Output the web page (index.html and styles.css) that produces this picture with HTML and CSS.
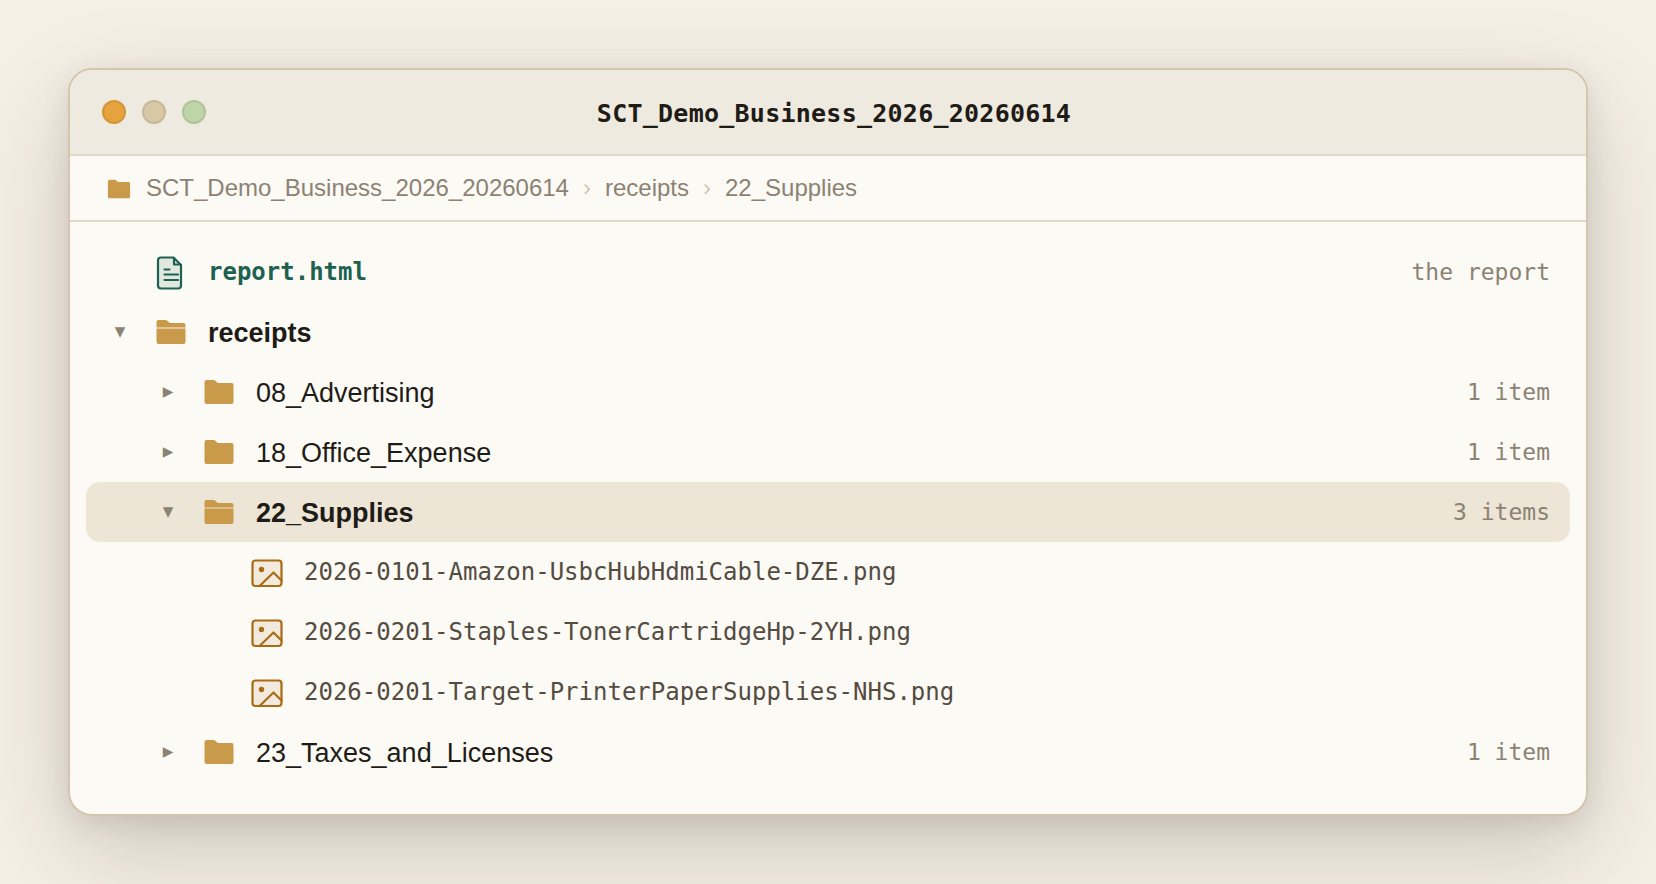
FILE: index.html
```html
<!DOCTYPE html>
<html lang="en">
<head>
  <meta charset="UTF-8" />
  <meta name="viewport" content="width=device-width, initial-scale=1" />
  <title>SCT_Demo_Business_2026_20260614</title>
  <link rel="stylesheet" href="styles.css">
</head>
<body>
  <!-- shared icons -->
  <svg class="sprite" aria-hidden="true">
    <symbol id="folder" viewBox="0 0 34 34">
      <path d="M2.5 7a2 2 0 0 1 2-2h7a3 3 0 0 1 2.1.9l2.100 2.100H29.500a2 2 0 0 1 2 2V27a2 2 0 0 1-2 2H4.500a2 2 0 0 1-2-2z"/>
    </symbol>
    <symbol id="folder-open" viewBox="0 0 34 34">
      <path d="M2.5 12V7a2 2 0 0 1 2-2h7a3 3 0 0 1 2.100.9l2.100 2.100H29.500a2 2 0 0 1 2 2V12z"/>
      <path d="M2.5 12h29v2h-29z" opacity=".55"/>
      <path d="M2.5 14h29v13a2 2 0 0 1-2 2H4.500a2 2 0 0 1-2-2z"/>
    </symbol>
    <symbol id="image" viewBox="0 0 34 34">
      <rect class="fill" x="2.500" y="4.500" width="29" height="25.500" rx="3"/>
      <circle class="dot" cx="11.500" cy="13.500" r="2.700"/>
      <path d="M9.500 30L23.500 16.500 31.500 24.500"/>
    </symbol>
  </svg>

  <div class="window">
    <div class="titlebar">
      <div class="dots">
        <span class="dot-btn close"></span>
        <span class="dot-btn min"></span>
        <span class="dot-btn max"></span>
      </div>
      <div class="title">SCT_Demo_Business_2026_20260614</div>
    </div>

    <div class="crumbs">
      <svg class="crumb-icon"><use href="#folder"/></svg>
      <span>SCT_Demo_Business_2026_20260614</span>
      <span class="sep">›</span>
      <span>receipts</span>
      <span class="sep">›</span>
      <span>22_Supplies</span>
    </div>

    <div class="tree">
      <div class="row report">
        <span class="chevron"></span>
        <svg class="icon doc" viewBox="0 0 34 34">
          <path class="fill" d="M7 1.500h12.500L27 9v20.500a3 3 0 0 1-3 3H7a3 3 0 0 1-3-3V4.500a3 3 0 0 1 3-3z"/>
          <path d="M20 2v6.500h6.500M10.500 13.500h5M10.500 18.500h13.500M10.500 24h13.500"/>
        </svg>
        <span class="name">report.html</span>
        <span class="meta">the report</span>
      </div>
      <div class="row open">
        <span class="chevron">▾</span>
        <svg class="icon folder"><use href="#folder-open"/></svg>
        <span class="name">receipts</span>
      </div>
      <div class="row level-1">
        <span class="chevron">▸</span>
        <svg class="icon folder"><use href="#folder"/></svg>
        <span class="name">08_Advertising</span>
        <span class="meta">1 item</span>
      </div>
      <div class="row level-1">
        <span class="chevron">▸</span>
        <svg class="icon folder"><use href="#folder"/></svg>
        <span class="name">18_Office_Expense</span>
        <span class="meta">1 item</span>
      </div>
      <div class="row level-1 open selected">
        <span class="chevron">▾</span>
        <svg class="icon folder"><use href="#folder-open"/></svg>
        <span class="name">22_Supplies</span>
        <span class="meta">3 items</span>
      </div>
      <div class="row level-2 file">
        <span class="chevron"></span>
        <svg class="icon image"><use href="#image"/></svg>
        <span class="name">2026-0101-Amazon-UsbcHubHdmiCable-DZE.png</span>
      </div>
      <div class="row level-2 file">
        <span class="chevron"></span>
        <svg class="icon image"><use href="#image"/></svg>
        <span class="name">2026-0201-Staples-TonerCartridgeHp-2YH.png</span>
      </div>
      <div class="row level-2 file">
        <span class="chevron"></span>
        <svg class="icon image"><use href="#image"/></svg>
        <span class="name">2026-0201-Target-PrinterPaperSupplies-NHS.png</span>
      </div>
      <div class="row level-1">
        <span class="chevron">▸</span>
        <svg class="icon folder"><use href="#folder"/></svg>
        <span class="name">23_Taxes_and_Licenses</span>
        <span class="meta">1 item</span>
      </div>
    </div>
  </div>
</body>
</html>
```
FILE: styles.css
```css
* {
  box-sizing: border-box;
}

body {
  margin: 0;
  padding: 68px;
  height: 884px;
  overflow: hidden;
  background: #f5f0e6;
  color: #1f1b16;
  font-family: "Liberation Sans", Arial, sans-serif;
}

.sprite {
  display: none;
}

.window {
  height: 748px;
  background: #fcfaf5;
  border: 2px solid #d4c5ad;
  border-radius: 24px;
  overflow: hidden;
  box-shadow: 0 36px 100px rgba(40, 30, 15, 0.18), 0 8px 28px rgba(40, 30, 15, 0.1);
}

/* Title bar */
.titlebar {
  display: flex;
  align-items: center;
  gap: 12px;
  height: 86px;
  padding: 0 32px;
  background: #eeeadf;
  border-bottom: 2px solid #e2d8c6;
}

.dots {
  display: flex;
  gap: 16px;
}

.dot-btn {
  width: 24px;
  height: 24px;
  border-radius: 50%;
  border: 2px solid rgba(0, 0, 0, 0.08);
}

.close {
  background: #e6a23c;
}

.min {
  background: #d9c8a6;
}

.max {
  background: #bfd4a8;
}

.title {
  flex: 1;
  margin-right: 104px;
  padding-top: 2px;
  text-align: center;
  font: 700 25px "DejaVu Sans Mono", monospace;
  letter-spacing: 0.01em;
}

/* Breadcrumbs */
.crumbs {
  display: flex;
  align-items: center;
  gap: 14px;
  height: 66px;
  padding: 0 36px;
  border-bottom: 2px solid #e2d8c6;
  color: #8c8273;
  font-size: 24px;
}

.crumb-icon {
  width: 26px;
  height: 26px;
  margin-top: 1px;
  fill: #c99a4a;
}

.sep {
  color: #d4c5ad;
}

/* File tree */
.tree {
  padding: 20px 16px 32px;
}

.row {
  display: flex;
  align-items: center;
  gap: 20px;
  height: 60px;
  padding: 0 20px;
  border-radius: 14px;
  font-size: 27px;
}

.level-1 {
  padding-left: 68px;
}

.level-2 {
  padding-left: 116px;
}

.selected {
  background: #ede5d6;
}

.chevron {
  width: 28px;
  padding-bottom: 2px;
  text-align: center;
  color: #8c8273;
  font: 21px "DejaVu Sans", sans-serif;
}

.icon {
  width: 34px;
  height: 34px;
}

.folder {
  fill: #c99a4a;
}

.doc,
.image {
  margin-top: 2px;
  fill: none;
  stroke-width: 2.2;
  stroke-linejoin: round;
  stroke-linecap: round;
}

.doc {
  stroke: #1d6250;
}

.doc .fill {
  fill: #e1e8e0;
}

.image {
  stroke: #a96c14;
}

.fill {
  fill: #f3eade;
}

.dot {
  fill: #a96c14;
  stroke: none;
}

.name {
  padding-top: 2px;
}

.open .name {
  font-weight: 700;
}

.report .name {
  padding-top: 0;
  color: #1d6250;
  font: 700 24px "DejaVu Sans Mono", monospace;
}

.file .name {
  padding-top: 0;
  color: #544b41;
  font: 24px "DejaVu Sans Mono", monospace;
}

.meta {
  margin-left: auto;
  color: #8c8273;
  font: 23px "DejaVu Sans Mono", monospace;
}
```
